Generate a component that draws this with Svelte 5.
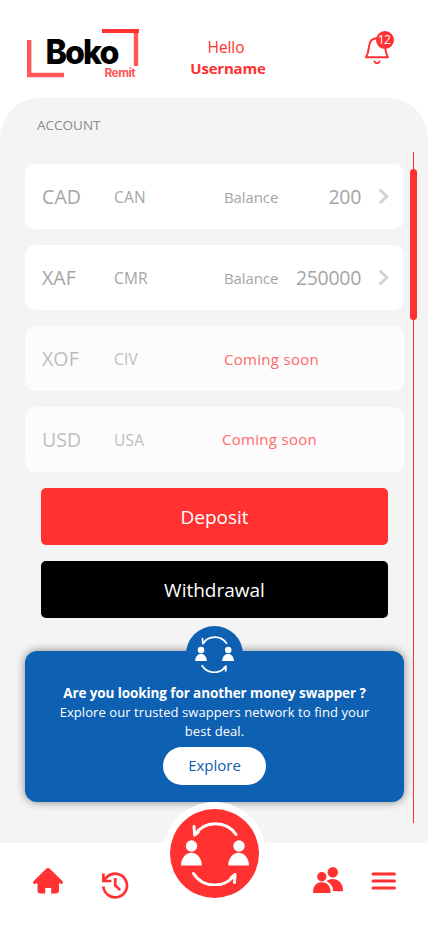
<script lang="ts">
  type Account = {
    code: string;
    country: string;
    balance?: number;
  };

  const username = 'Username';
  const notifications = 12;

  const accounts: Account[] = [
    { code: 'CAD', country: 'CAN', balance: 200 },
    { code: 'XAF', country: 'CMR', balance: 250000 },
    { code: 'XOF', country: 'CIV' },
    { code: 'USD', country: 'USA' },
  ];
</script>

{#snippet swapIcon()}
  <svg class="swap-icon" viewBox="0 0 68 64" fill="none" stroke="currentColor" stroke-width="3" stroke-linecap="round" stroke-linejoin="round">
    <path d="M13 4.500l.7 8.500A25 25 0 0 1 55 12.500M13.700 13l3.600-3" />
    <path d="M12.500 51.500A25 25 0 0 0 54 52.500L53.500 60.500M54 52.500l-4 3.500" />
    <g fill="currentColor" stroke="none">
      <circle cx="10.500" cy="24" r="5.700" />
      <circle cx="58" cy="24" r="5.700" />
      <path d="M0 43.500a10.400 12.800 0 0 1 20.800 0z" />
      <path d="M47.200 43.500a10.400 12.800 0 0 1 20.800 0z" />
    </g>
  </svg>
{/snippet}

<div class="app">
  <header>
    <svg class="logo" width="112" height="49" viewBox="0 0 112 49">
      <path d="M2.200 11v35H37" fill="none" stroke="#ff5757" stroke-width="4.400" />
      <path d="M109 2v35" fill="none" stroke="#ff5757" stroke-width="4.400" />
      <path d="M75 2h37" stroke="#ff3131" stroke-width="4.200" />
      <text class="logo-main" x="18.500" y="35" textLength="72" lengthAdjust="spacingAndGlyphs">Boko</text>
      <text class="logo-sub" x="77.500" y="47.700" textLength="30.500" lengthAdjust="spacingAndGlyphs">Remit</text>
    </svg>

    <div class="greeting">
      <span class="hello">Hello</span>
      <span class="name">{username}</span>
    </div>

    <div class="bell">
      <svg width="26" height="30" viewBox="0 0 26 30" fill="none" stroke="#ff3131" stroke-width="2" stroke-linecap="round" stroke-linejoin="round">
        <path d="M2 22.200C4.500 18 4.500 16 5 11.500 5.600 6 9 3.300 13 3.300s7.400 2.700 8 8.200c.500 4.500.500 6.500 3 10.700z" />
        <path d="M10.500 26.500c.700 2.200 4.300 2.200 5 0" />
      </svg>
      <span class="badge">{notifications}</span>
    </div>
  </header>

  <main>
    <h2>ACCOUNT</h2>

    <div class="accounts">
      {#each accounts as account}
        <div class="card" class:soon={account.balance === undefined}>
          <span class="code">{account.code}</span>
          <span class="country">{account.country}</span>
          {#if account.balance !== undefined}
            <span class="label">Balance</span>
            <span class="amount">{account.balance}</span>
            <svg class="chevron" width="12" height="17" viewBox="0 0 12 17" fill="none" stroke="#d2d2d2" stroke-width="3" stroke-linecap="round" stroke-linejoin="round">
              <path d="M2.500 2.500l6.500 6-6.500 6" />
            </svg>
          {:else}
            <span class="coming">Coming soon</span>
          {/if}
        </div>
      {/each}
    </div>

    <div class="actions">
      <button class="deposit">Deposit</button>
      <button class="withdrawal">Withdrawal</button>
    </div>

    <section class="promo">
      <div class="promo-badge">{@render swapIcon()}</div>
      <strong>Are you looking for another money swapper ?</strong>
      <p>Explore our trusted swappers network to find your<br />best deal.</p>
      <button class="explore">Explore</button>
    </section>

    <div class="track"><div class="thumb"></div></div>
  </main>

  <nav>
    <svg class="home" width="30" height="26" viewBox="0 0 30 26" fill="#ff3131">
      <path d="M13.200.800a2.700 2.700 0 0 1 3.600 0L29.500 13.300c1.200 1.300-.100 3.100-1.700 2.500L26 15v7.500a3 3 0 0 1-3 3h-4.800V20h-6v5.500H7.500a3 3 0 0 1-3-3V15l-2.200.800C.700 16.400-.700 14.600.5 13.300z" />
    </svg>
    <svg class="history" width="28" height="28" viewBox="0 0 28 28" fill="none" stroke="#ff3131" stroke-width="2.700">
      <path d="M2.400 15.500A11.800 11.800 0 1 0 6 6L2.400 9.500" />
      <path d="M2.400 2.500v7.500h8" />
      <path d="M14.200 7v7.300l5 4.800" />
    </svg>

    <button class="swap" aria-label="Swap">{@render swapIcon()}</button>

    <svg class="people" width="30" height="27" viewBox="0 0 30 27" fill="#ff3131">
      <circle cx="19.800" cy="5.300" r="5.200" />
      <circle cx="8.800" cy="9.800" r="4.700" />
      <path d="M0 25C0 18.500 4 15.300 8.800 15.300S17.600 18.500 17.600 25q0 1-1 1H1q-1 0-1-1z" />
      <path d="M13.500 14.200c1.800-1.500 4-2.200 6.300-2.200 5.500 0 10.200 4.300 10.200 11.300q0 1-1 1h-8.800c0-4.600-2.500-8.300-6.700-10.100z" />
    </svg>
    <svg class="menu" width="26" height="20" viewBox="0 0 26 20" stroke="#ff3131" stroke-width="3" stroke-linecap="round">
      <path d="M2 3h21.500M2 10h21.500M2 17h21.500" />
    </svg>
  </nav>
</div>

<style>
  :global(body) {
    margin: 0;
    background: #fff;
    overflow: hidden;
  }

  .app {
    width: 428px;
    height: 926px;
    display: flex;
    flex-direction: column;
    background: #fff;
    font-family: 'Open Sans', 'Noto Sans', sans-serif;
  }

  button {
    border: none;
    padding: 0;
    font-family: inherit;
    cursor: pointer;
  }

  header {
    height: 98px;
    flex: none;
    display: flex;
    align-items: flex-start;
    box-sizing: border-box;
    padding: 29px 34px 0 27px;
  }

  .logo {
    overflow: visible;
  }

  .logo-main {
    font-family: Inter, sans-serif;
    font-weight: 800;
    font-size: 33.5px;
    letter-spacing: -2px;
    fill: #000;
  }

  .logo-sub {
    font-family: Inter, sans-serif;
    font-weight: 700;
    font-size: 12px;
    letter-spacing: -0.5px;
    fill: #ff5757;
  }

  .greeting {
    width: 110px;
    margin: 8px 0 0 34px;
    display: flex;
    flex-direction: column;
    align-items: center;
    color: #ff3131;
    line-height: 21px;
  }

  .hello {
    margin-right: 4px;
    font-size: 15.5px;
    letter-spacing: -0.1px;
  }

  .name {
    font-size: 15px;
    font-weight: 700;
    letter-spacing: -0.2px;
  }

  .bell {
    position: relative;
    margin: 6px 0 0 auto;
    padding-right: 4px;
  }

  .bell svg {
    display: block;
  }

  .badge {
    position: absolute;
    top: -4px;
    right: 0;
    width: 18px;
    height: 18px;
    border-radius: 50%;
    background: #ff3131;
    color: #fff;
    font-size: 12px;
    line-height: 17px;
    text-align: center;
    text-indent: -2px;
    letter-spacing: -0.5px;
  }

  main {
    position: relative;
    height: 745px;
    flex: none;
    box-sizing: border-box;
    padding: 18px 24px 0 25px;
    border-radius: 40px 40px 0 0;
    background: #f4f4f4;
  }

  h2 {
    margin: 0 0 30px 12px;
    color: #8a8a8a;
    font-size: 13.5px;
    font-weight: 400;
    line-height: 18px;
    letter-spacing: 0;
  }

  .accounts {
    display: flex;
    flex-direction: column;
    gap: 16px;
  }

  .card {
    height: 65px;
    box-sizing: border-box;
    padding: 0 14px 0 17px;
    display: grid;
    grid-template-columns: 72px 110px 137px 1fr;
    align-items: center;
    border-radius: 10px;
    background: #fff;
    color: #a5a5a5;
    line-height: 24px;
  }

  .card > * {
    grid-row: 1;
  }

  .code {
    grid-column: 1;
    font-size: 19.5px;
    letter-spacing: 0.1px;
  }

  .country {
    grid-column: 2;
    font-size: 15.5px;
    letter-spacing: 0.2px;
  }

  .label {
    grid-column: 3;
    font-size: 15px;
    letter-spacing: -0.1px;
  }

  .amount {
    grid-column: 3;
    justify-self: end;
    font-size: 19.5px;
    letter-spacing: -0.3px;
  }

  .chevron {
    grid-column: 4;
    justify-self: end;
  }

  .coming {
    grid-column: 3 / 5;
    color: #ff3131;
    font-size: 15px;
    letter-spacing: 0.3px;
  }

  .soon {
    background: #fcfcfc;
    color: #bebebe;
  }

  .soon .coming {
    color: #ff6a6a;
  }

  .card:last-child .coming {
    margin: -2px 0 0 -2px;
  }

  .actions {
    display: flex;
    flex-direction: column;
    gap: 16px;
    padding: 16px 16px 33px;
  }

  .actions button {
    height: 57px;
    border-radius: 5px;
    color: #fff;
    font-size: 19px;
  }

  .deposit {
    background: #ff3131;
  }

  .withdrawal {
    background: #000;
  }

  .promo {
    position: relative;
    height: 151px;
    box-sizing: border-box;
    padding-top: 33px;
    display: flex;
    flex-direction: column;
    align-items: center;
    border-radius: 12px;
    background: #0e60b2;
    box-shadow: 0 0 10px rgba(0, 0, 0, 0.45);
    color: #fff;
    font-size: 13px;
    line-height: 19px;
    text-align: center;
  }

  .promo-badge {
    position: absolute;
    top: -25px;
    left: 161px;
    width: 57px;
    height: 57px;
    display: flex;
    align-items: center;
    justify-content: center;
    border-radius: 50%;
    background: #0e60b2;
    color: #fff;
  }

  .promo-badge .swap-icon {
    width: 39px;
    height: 37px;
  }

  .promo strong {
    font-size: 13.5px;
    letter-spacing: -0.1px;
  }

  .promo p {
    margin: 0;
    letter-spacing: 0.07px;
  }

  .explore {
    width: 103px;
    height: 38px;
    margin-top: 6px;
    padding-bottom: 2px;
    border-radius: 19px;
    background: #fff;
    color: #0e60b2;
    font-size: 15px;
  }

  .track {
    position: absolute;
    top: 54px;
    left: 413px;
    width: 1px;
    height: 671px;
    background: #ff3131;
  }

  .thumb {
    width: 7px;
    height: 151px;
    margin: 17px 0 0 -3px;
    border-radius: 4px;
    background: #ff3131;
  }

  nav {
    position: relative;
    height: 83px;
    display: flex;
    align-items: flex-start;
    box-sizing: border-box;
    padding: 24px 31px 0 33px;
    background: #fff;
  }

  .home {
    margin-top: 1px;
  }

  .history {
    margin: 4px 0 0 38px;
  }

  .people {
    margin-left: auto;
  }

  .menu {
    margin: 4px 0 0 28px;
  }

  /* Raised above the bar, the white ring cuts into the panel */
  .swap {
    position: absolute;
    top: -34px;
    left: 170px;
    width: 89px;
    height: 89px;
    display: flex;
    align-items: center;
    justify-content: center;
    border-radius: 50%;
    background: #ff3131;
    box-shadow: 0 0 0 7px #fff;
    color: #fff;
  }

  .swap .swap-icon {
    width: 68px;
    height: 64px;
    flex: none;
  }
</style>
